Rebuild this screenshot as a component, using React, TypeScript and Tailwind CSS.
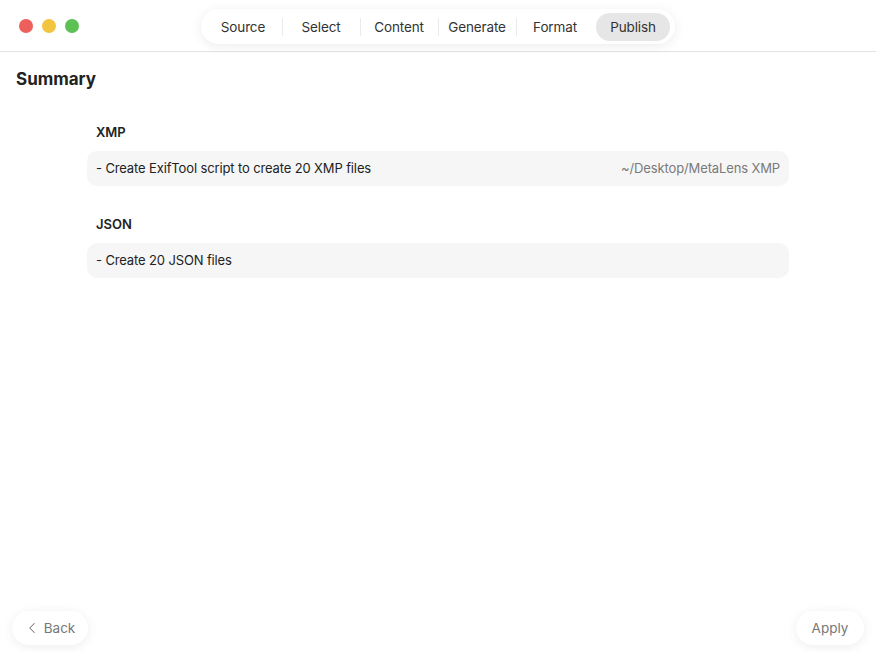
import { ChevronLeft } from 'lucide-react';

const steps = ['Source', 'Select', 'Content', 'Generate', 'Format', 'Publish'];

const sections = [
  { title: 'XMP', task: '- Create ExifTool script to create 20 XMP files', path: '~/Desktop/MetaLens XMP' },
  { title: 'JSON', task: '- Create 20 JSON files', path: '' },
];

export default function App() {
  const active = 'Publish';

  return (
    <div
      className="w-[876px] h-[652px] bg-white flex flex-col text-[#222]"
      style={{ fontFamily: 'Inter, "Liberation Sans", sans-serif' }}
    >
      <header className="h-[52px] shrink-0 border-b border-[#e3e3e3] flex items-center relative">
        <div className="flex items-center gap-[9px] pl-[19px]">
          <span className="w-[14px] h-[14px] rounded-full bg-[#ec5f5a]" />
          <span className="w-[14px] h-[14px] rounded-full bg-[#f3c43f]" />
          <span className="w-[14px] h-[14px] rounded-full bg-[#5cc052]" />
        </div>
        <nav className="absolute left-[201px] top-[9px] h-[35px] w-[474px] rounded-full bg-white shadow-[0_2px_12px_rgba(0,0,0,0.08)] flex items-center px-[3px] pt-px">
          {steps.map((s, i) => {
            const showDivider = i > 0 && s !== active && steps[i - 1] !== active;
            return (
              <div key={s} className="relative flex-1 h-full flex items-center">
                {showDivider && <span className="absolute left-0 top-[8px] h-[18px] w-px bg-[#ebebeb]" />}
                <span
                  className={
                    s === active
                      ? 'flex-1 mx-[2px] h-[28px] rounded-full bg-[#e6e6e6] flex items-center justify-center text-[13.5px] tracking-[-0.01em] text-[#333]'
                      : 'flex-1 flex items-center justify-center text-[13.5px] tracking-[-0.01em] text-[#333]'
                  }
                >
                  {s}
                </span>
              </div>
            );
          })}
        </nav>
      </header>

      <main className="flex-1 flex flex-col">
        <h1 className="text-[17px] font-bold px-4 pt-[16px] leading-[22px]">Summary</h1>
        <div className="w-[702px] mx-auto mt-[33px] flex flex-col gap-[29px]">
          {sections.map((sec) => (
            <section key={sec.title}>
              <h2 className="text-[13px] font-semibold px-[9px] leading-[18px] mb-[10px]">{sec.title}</h2>
              <div className="h-[35px] rounded-[10px] bg-[#f6f6f6] flex items-center justify-between px-[9px] text-[13px] tracking-[-0.01em]">
                <span className="text-[#222]">{sec.task}</span>
                {sec.path && <span className="text-[#7a7a7a]">{sec.path}</span>}
              </div>
            </section>
          ))}
        </div>
      </main>

      <footer className="shrink-0 flex items-center justify-between px-3 pb-[7px]">
        <button className="h-[34px] w-[76px] rounded-full bg-white shadow-[0_2px_12px_rgba(0,0,0,0.07)] flex items-center justify-center gap-[3px] text-[13.5px] text-[#777]">
          <ChevronLeft size={18} strokeWidth={1.4} className="-ml-[2px]" />
          Back
        </button>
        <button className="h-[34px] w-[68px] rounded-full bg-white shadow-[0_2px_12px_rgba(0,0,0,0.07)] flex items-center justify-center text-[13.5px] text-[#777]">
          Apply
        </button>
      </footer>
    </div>
  );
}
